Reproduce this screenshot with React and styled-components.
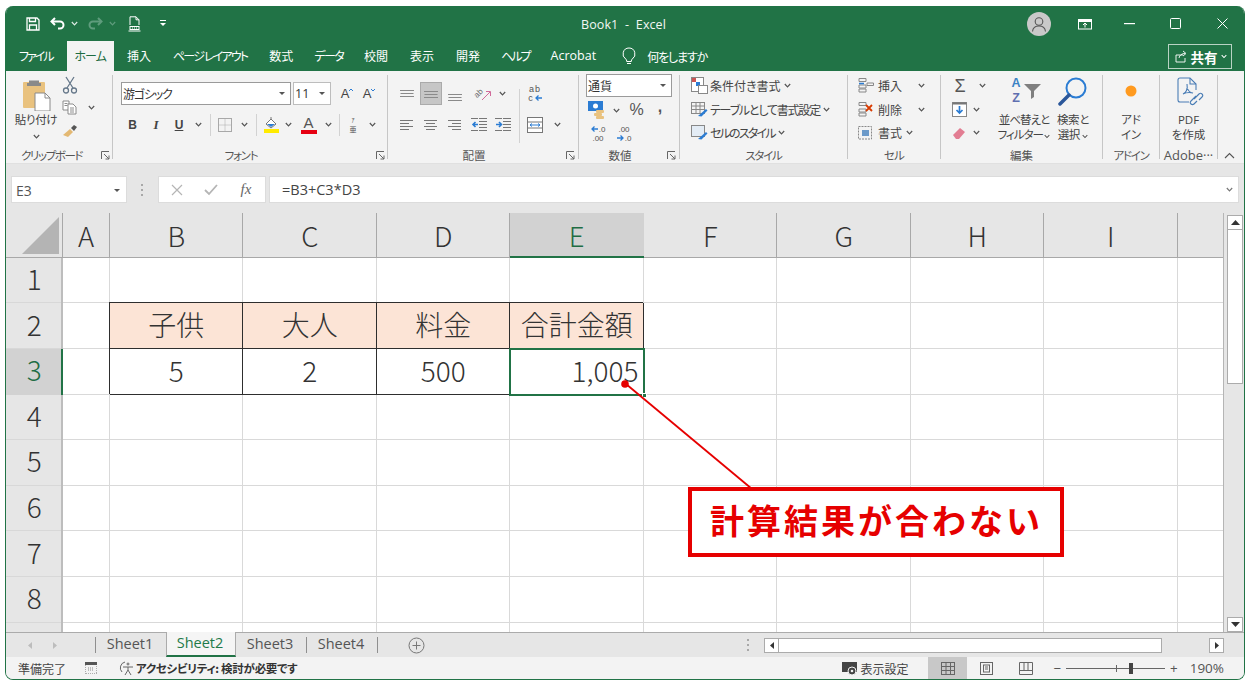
import React from "react";
import styled, { createGlobalStyle } from "styled-components";

const UI = '"Open Sans","Noto Sans CJK JP",sans-serif';
const JP = '"Noto Sans CJK JP","Noto Sans",sans-serif';
const GREEN = "#217346";

const Global = createGlobalStyle`
  html, body { margin: 0; background: #fff; }
  body { font-family: ${UI}; color: #444; font-feature-settings: "palt"; }
`;

const Page = styled.div`
  width: 1251px; height: 687px; box-sizing: border-box; padding: 6px 6px 7px 5px;
`;
const Window = styled.div`
  width: 1240px; height: 674px; box-sizing: border-box; display: flex; flex-direction: column;
  border-left: 1px solid ${GREEN}; border-right: 1px solid ${GREEN}; border-bottom: 1px solid ${GREEN};
  border-radius: 8px; overflow: hidden; position: relative; background: #e6e6e6;
`;

/* ---------- title bar ---------- */
const TitleBar = styled.div`
  height: 35px; flex: none; background: ${GREEN}; color: #fff; position: relative;
  display: flex; align-items: center; padding-left: 20px;
`;
const Qat = styled.div`display: flex; align-items: center; gap: 0;`;
const Slot = styled.span`
  width: ${p => p.$w}px; flex: none; display: inline-flex; align-items: center; justify-content: center;
  height: ${p => p.$h || 22}px; margin-left: ${p => p.$ml || 0}px;
`;
const Title = styled.div`
  position: absolute; left: 575px; top: 10px; font-size: 12.5px; line-height: 18px; letter-spacing: .1px; white-space: pre; color: #f2f7f4;
`;
const WinButtons = styled.div`margin-left: auto; display: flex; align-items: center; padding-right: 0;`;
const Avatar = styled.span`
  width: 24px; height: 24px; border-radius: 50%; background: #c9c9c9; display: flex; align-items: center; justify-content: center; margin-right: 27px;
`;

/* ---------- tabs ---------- */
const TabsBar = styled.div`
  height: 30px; flex: none; background: ${GREEN}; display: flex; align-items: stretch; padding-left: 2px; position: relative; font-family: ${JP};
`;
const Tab = styled.div`
  padding: 0 ${p => p.$pad ?? 11}px; font-size: ${p => p.$latin ? 12.5 : 12}px; line-height: 30px; color: ${p => p.$active ? "#1d6b41" : "#fff"};
  letter-spacing: ${p => p.$ls ?? 0}px; margin-left: ${p => p.$ml ?? 0}px;
  background: ${p => p.$active ? "#f3f3f3" : "transparent"}; white-space: nowrap; font-family: ${p => p.$latin ? UI : JP};
`;
const Tell = styled.div`display: flex; align-items: center; gap: 11px; margin-left: 15px; color: #fff; font-size: 12px; letter-spacing: -1.1px;`;
const Share = styled.div`
  position: absolute; right: 12px; top: 3px; width: 64px; height: 25px; box-sizing: border-box; border: 1px solid #b9d3c4;
  color: #fff; font-size: 13.5px; font-weight: 700; display: flex; align-items: center; justify-content: center; gap: 3px;
`;

/* ---------- ribbon ---------- */
const Ribbon = styled.div`
  height: 93px; flex: none; background: #f3f3f3; display: flex; border-bottom: 1px solid #e0e0e0; box-sizing: border-box; font-family: ${JP}; position: relative; color: #444;
`;
const Group = styled.div`
  width: ${p => p.$w}px; flex: none; display: flex; flex-direction: column; position: relative; height: 100%;
`;
const GroupBody = styled.div`
  flex: 1; display: flex; min-height: 0; padding: ${p => p.$pt ?? 4}px 0 0 ${p => p.$pl ?? 0}px; box-sizing: border-box;
`;
const GroupLabel = styled.div`
  height: 17px; flex: none; text-align: ${p => p.$left ? "left" : "center"}; font-size: ${p => p.$latin ? 13 : 11.5}px; line-height: 16px; color: #555; white-space: nowrap; box-sizing: border-box;
  padding: 1px ${p => p.$launch ? 18 : 0}px 0 ${p => p.$left ? 15 : 0}px; letter-spacing: ${p => p.$ls ?? 0}px; font-family: ${p => p.$latin ? UI : JP};
`;
const Launcher = styled.svg`position: absolute; right: ${p => p.$r ?? 3}px; bottom: 3px;`;
const Divider = styled.div`width: 1px; flex: none; margin: 4px 0 4px; background: #c6c6c6;`;
const Stack = styled.div`display: flex; flex-direction: column; gap: ${p => p.$gap ?? 0}px; flex: none; width: ${p => p.$w ? p.$w + "px" : "auto"}; margin-top: ${p => p.$mt ?? 0}px; margin-left: ${p => p.$ml ?? 0}px;`;
const Row = styled.div`display: flex; align-items: center; height: ${p => p.$h ?? 23}px; flex: none; margin-top: ${p => p.$mt ?? 0}px;`;
const Big = styled.div`
  width: ${p => p.$w}px; flex: none; display: flex; flex-direction: column; align-items: center; margin-left: ${p => p.$ml || 0}px;
  font-size: 11.5px; line-height: 15.5px; color: #444; text-align: center; white-space: nowrap; letter-spacing: ${p => p.$ls ?? 0}px;
`;
const BigIcon = styled.div`height: ${p => p.$h ?? 33}px; display: flex; align-items: flex-start; justify-content: center;`;
const PasteCaret = styled.span`display: flex; margin-top: 6px;`;
const Select = styled.div`
  width: ${p => p.$w}px; height: ${p => p.$h ?? 23}px; flex: none; box-sizing: border-box; background: #fff; border: 1px solid ${p => p.$dark ? "#9a9a9a" : "#bdbdbd"};
  display: flex; align-items: center; justify-content: space-between; padding: 0 5px 0 1px; font-size: ${p => p.$fs ?? 12}px; margin-left: ${p => p.$ml || 0}px; color: #333; font-family: ${p => p.$latin ? UI : JP};
  letter-spacing: ${p => p.$ls ?? 0}px;
`;
const Tri = styled.span`width: 0; height: 0; border-left: 3px solid transparent; border-right: 3px solid transparent; border-top: 3px solid #555; flex: none;`;
const RowSep = styled.span`width: 1px; height: 22px; background: #d2d2d2; flex: none; margin: 0 ${p => p.$m ?? 4}px;`;
const Letter = styled.span`
  font-family: "Liberation Sans", sans-serif; font-size: ${p => p.$fs ?? 12}px; font-weight: ${p => p.$b ? 700 : 400};
  font-style: ${p => p.$i ? "italic" : "normal"}; text-decoration: ${p => p.$u ? "underline" : "none"}; color: ${p => p.$c || "#444"}; line-height: 1;
`;
const Selected = styled.span`
  width: 22px; height: 23px; background: #c6c6c6; border: 1px solid #aaa; box-sizing: border-box; display: flex; align-items: center; justify-content: center;
`;
const StyleText = styled.span`font-size: 12px; color: #444; white-space: nowrap; margin-left: ${p => p.$ml ?? 2}px; letter-spacing: ${p => p.$ls ?? 0}px;`;
const InnerDivider = styled.div`width: 1px; height: 54px; background: #d2d2d2; margin-top: 7px; flex: none;`;
const Collapse = styled.svg`position: absolute; right: 9px; bottom: 4px;`;
const Stacked = styled.span`display: inline-flex; flex-direction: column; align-items: center;`;
const MiniGlyph = styled.span`font-size: ${p => p.$fs}px; line-height: ${p => p.$lh}px; color: #555; font-family: ${JP};`;
const SortLetter = styled.span`font-family: "Liberation Sans", sans-serif; font-weight: 700; font-size: 12.5px; line-height: 14.5px; color: ${p => p.$c};`;
const Decimal = styled.span`font-size: 8px; line-height: 9px; color: #555; font-family: "Liberation Sans", sans-serif; text-align: center; display: inline-flex; flex-direction: column; align-items: center;`;
const DecimalLine = styled.span`display: inline-flex; align-items: center; gap: 1px;`;

/* ---------- formula bar ---------- */
const FormulaBar = styled.div`
  height: 49px; flex: none; background: #e6e6e6; display: flex; padding: 12px 5px 10px 5px; box-sizing: border-box; align-items: stretch;
`;
const NameBox = styled.div`
  width: 116px; background: #fff; border: 1px solid #dcdcdc; box-sizing: border-box; display: flex; align-items: center; justify-content: space-between;
  padding: 2px 6px 0 4px; font-size: 14px; color: #555; flex: none;
`;
const Grip = styled.div`width: 31px; flex: none; display: flex; align-items: center; justify-content: center;`;
const FxBox = styled.div`
  width: 108px; flex: none; background: #fff; border: 1px solid #dcdcdc; box-sizing: border-box; display: flex; align-items: center;
`;
const FxSign = styled.span`font-family: "Liberation Serif", serif; font-style: italic; font-size: 15px; color: #666; font-weight: 400; width: 20px; margin-left: 18px; text-align: center;`;
const FormulaInput = styled.div`
  flex: 1; margin-left: 3px; background: #fff; border: 1px solid #dcdcdc; box-sizing: border-box; display: flex; align-items: center; justify-content: space-between;
  padding: 0 5px 1px 12px; font-size: 14.5px; color: #444;
`;

/* ---------- sheet ---------- */
const SheetWrap = styled.div`height: 419px; flex: none; display: flex; background: #e6e6e6; position: relative;`;
const SheetGrid = styled.div`
  width: 1217px; flex: none; height: 100%; overflow: hidden; display: grid; background: #fff;
  grid-template-columns: 56.5px 47px repeat(8, 133.5px) 46px;
  grid-template-rows: 44.8px repeat(9, 45.6px);
  border-right: 1px solid #b5b5b5; box-sizing: content-box;
  font-family: ${JP}; color: #333;
`;
const Corner = styled.div`background: #e6e6e6; display: flex; align-items: flex-start; justify-content: flex-start; box-shadow: inset -1px -1px 0 #a8a8a8;`;
const ColHead = styled.div`
  background: ${p => p.$sel ? "#d2d2d2" : "#e6e6e6"}; color: ${p => p.$sel ? "#1f6d44" : "#333"};
  display: flex; align-items: center; justify-content: center; font-size: 27.5px; font-weight: 300; padding-bottom: 1px; box-sizing: border-box;
  box-shadow: ${p => p.$sel ? `inset 0 -2px 0 ${GREEN}` : "inset -1px -1px 0 #a8a8a8"};
`;
const RowHead = styled.div`
  background: ${p => p.$sel ? "#d2d2d2" : "#e6e6e6"}; color: ${p => p.$sel ? "#1f6d44" : "#333"};
  display: flex; align-items: center; justify-content: center; font-size: 28px; font-weight: 300; padding-bottom: 5px; box-sizing: border-box;
  box-shadow: ${p => p.$sel ? `inset -2px 0 0 ${GREEN}` : "inset -2px 0 0 #bdbdbd, inset 0 -1px 0 #d8d8d8"};
`;
const Cell = styled.div`
  position: relative; display: flex; align-items: center; font-size: 28px; font-weight: 300; white-space: nowrap; overflow: visible;
  justify-content: ${p => p.$right ? "flex-end" : "center"}; padding: 0 ${p => p.$right ? 5 : 0}px 4px 0; box-sizing: border-box;
  background: ${p => p.$fill ? "#fce4d6" : "#fff"};
  box-shadow: ${p => p.$boxed ? "inset -1px -1px 0 #2e2e2e, -1px -1px 0 0 #2e2e2e" : "inset -1px -1px 0 #d9d9d9"};
  ${p => p.$boxed ? "z-index: 1;" : ""}
  ${p => p.$active ? `box-shadow: none; outline: 2px solid ${GREEN}; outline-offset: -1.5px; z-index: 2;` : ""}
`;
const Handle = styled.span`position: absolute; right: -3px; bottom: -3px; width: 5px; height: 5px; background: ${GREEN}; border: 1px solid #fff; box-sizing: border-box;`;
const ScrollCol = styled.div`
  flex: 1; display: flex; flex-direction: column; align-items: flex-start; padding: 2px 0 0 3px; box-sizing: border-box;
`;
const VBtn = styled.div`
  width: 16px; height: 15px; flex: none; background: #fff; border: 1px solid #ababab; box-sizing: border-box; display: flex; align-items: center; justify-content: center;
`;
const VThumb = styled.div`width: 16px; height: 154px; flex: none; background: #fff; border: 1px solid #ababab; border-top: none; box-sizing: border-box;`;
const VSpacer = styled.div`flex: 1;`;
const Callout = styled.div`
  position: absolute; left: 682px; top: 274px; width: 376px; height: 70px; box-sizing: border-box; border: 4px solid #e60000; background: #fff;
  color: #e60000; font-family: ${JP}; font-weight: 700; font-size: 34px; letter-spacing: 3px; display: flex; align-items: center; padding-left: 18px; padding-bottom: 6px; white-space: nowrap; z-index: 5;
  font-feature-settings: normal;
`;
const Leader = styled.svg`position: absolute; left: 0; top: 0; z-index: 4; pointer-events: none;`;

/* ---------- sheet tabs ---------- */
const SheetTabs = styled.div`
  height: 25px; flex: none; background: #e6e6e6; display: flex; align-items: stretch; box-sizing: border-box; border-top: 1px solid #ababab; padding-right: 20px; color: #555;
`;
const NavArea = styled.div`width: 89px; flex: none; display: flex; align-items: center; padding-left: 22px; gap: 20px; box-sizing: border-box;`;
const SheetTab = styled.div`
  width: 70px; flex: none; box-sizing: border-box; text-align: center; font-size: 14.5px; line-height: 22px; color: ${p => p.$active ? "#1f7a4a" : "#555"};
  background: ${p => p.$active ? "#f5f5f5" : "transparent"}; padding-right: 2px;
  position: relative; top: ${p => p.$active ? -1 : 0}px; height: ${p => p.$active ? 25 : 24}px;
  ${p => p.$active ? `border: 1px solid #ababab; border-bottom: 2px solid ${GREEN}; border-top: none;` : ""}
`;
const TabSep = styled.span`width: 1px; height: 16px; background: #8f8f8f; flex: none; align-self: center; margin-top: -1px;`;
const AddBtn = styled.div`margin-left: 30px; display: flex; align-items: center;`;
const HScroll = styled.div`margin-left: auto; display: flex; align-items: center; flex: none;`;
const HBtn = styled.div`
  width: 15px; height: 15px; background: #fff; border: 1px solid #ababab; box-sizing: border-box; display: flex; align-items: center; justify-content: center; flex: none;
`;
const HThumb = styled.div`width: 383px; height: 15px; background: #fff; border: 1px solid #ababab; border-left: none; box-sizing: border-box; flex: none; margin-right: 47px;`;

/* ---------- status bar ---------- */
const StatusBar = styled.div`
  flex: 1; background: #f3f3f3; display: flex; align-items: center; padding: 0 20px 0 12px; font-family: ${JP}; font-size: 12px; color: #444; min-height: 0;
`;
const Access = styled.span`font-weight: 700; font-size: 11.5px; color: #333; white-space: nowrap; letter-spacing: -.3px;`;
const StatusRight = styled.div`margin-left: auto; display: flex; align-items: stretch; height: 100%;`;
const ViewBtn = styled.div`
  width: 39px; display: flex; align-items: center; justify-content: center; background: ${p => p.$active ? "#c8c8c8" : "transparent"}; flex: none;
`;
const Inline = styled.div`display: flex; align-items: center; margin-right: ${p => p.$mr ?? 0}px; margin-left: ${p => p.$ml ?? 0}px; margin-top: ${p => p.$mt ?? 0}px; gap: ${p => p.$gap ?? 0}px;`;
const Zoom = styled.span`font-family: ${UI}; font-size: 13.5px; color: #555; margin-left: 12px;`;
const Track = styled.div`width: 99px; height: 1px; background: #666; position: relative; flex: none;`;
const TrackTick = styled.span`position: absolute; left: 50px; top: -3px; width: 1px; height: 7px; background: #666;`;
const TrackThumb = styled.span`position: absolute; left: 63px; top: -5px; width: 4px; height: 11px; background: #444;`;

/* ---------- icons ---------- */
const Chev = ({ c = "#555", w = 7 }) => (
  <svg width={w} height="5" viewBox="0 0 7 5"><path d="M.8 1 3.5 3.8 6.2 1" fill="none" stroke={c} strokeWidth="1.2" /></svg>
);
const Lines = ({ kind, top }) => {
  const ws = { l: [[0, 13], [0, 9], [0, 13], [0, 9]], c: [[0, 13], [2, 9], [0, 13], [2, 9]], r: [[0, 13], [4, 9], [0, 13], [4, 9]] }[kind];
  if (top !== undefined) {
    return (
      <svg width="14" height="14" viewBox="0 0 14 14">
        {[0, 3, 6].map((d, i) => <rect key={i} x={i === 1 ? .5 : 0} y={top + d} width={i === 1 ? 13 : 14} height="1" fill="#8a8a8a" />)}
      </svg>
    );
  }
  return (
    <svg width="14" height="12" viewBox="0 0 14 12">
      {ws.map(([x, w], i) => <rect key={i} x={x} y={1 + i * 3} width={w} height="1" fill="#777" />)}
    </svg>
  );
};
const Indent = ({ flip }) => (
  <svg width="16" height="14" viewBox="0 0 16 14">
    <g fill="#777">{[0, 3, 6, 9, 12].map(y => <rect key={y} x={8} y={y} width="8" height="1" />)}</g>
    <rect x="0" y="0" width="7" height="1" fill="#777" /><rect x="0" y="12" width="7" height="1" fill="#777" />
    <path d={flip ? "M1 6.5h5M4 4l2.5 2.5L4 9" : "M7 6.5H2M4.5 4 2 6.5 4.5 9"} stroke="#2b7cd3" strokeWidth="1.6" fill="none" />
  </svg>
);
const MiniArrow = ({ left }) => (
  <svg width="7" height="6" viewBox="0 0 7 6" fill="none" stroke="#2b7cd3" strokeWidth="1.3"><path d={left ? "M7 3H1M3.500.5 1 3l2.500 2.500" : "M0 3h6M3.500.5 6 3 3.500 5.500"} /></svg>
);
const LaunchIcon = ({ r }) => (
  <Launcher $r={r} width="9" height="9" viewBox="0 0 9 9" fill="none" stroke="#666"><path d="M.5 8V.5H8M3 3l5 5M8 4.500V8H4.500" /></Launcher>
);

function App() {
  const cols = ["A", "B", "C", "D", "E", "F", "G", "H", "I", "J"];
  const heads = { 2: ["子供", "大人", "料金", "合計金額"], 3: ["5", "2", "500", "1,005"] };
  return (
    <Page>
      <Global />
      <Window>
        <TitleBar>
          <Qat>
            <Slot $w="14">
              <svg width="14" height="14" viewBox="0 0 14 14" fill="none" stroke="#fff" strokeWidth="1.3"><path d="M1 1h10l2 2v10H1z" /><path d="M3.5 1v3.5h6V1M3.5 13V8h7v5" /></svg>
            </Slot>
            <Slot $w="18" $ml="9">
              <svg width="16" height="13" viewBox="0 0 16 13" fill="none" stroke="#fff" strokeWidth="2"><path d="M5 1 1.5 4.5 5 8" /><path d="M2 4.5h8a3.5 3.5 0 0 1 0 7H8" /></svg>
            </Slot>
            <Slot $w="8" $ml="3"><Chev c="#dcebe3" /></Slot>
            <Slot $w="18" $ml="8">
              <svg width="16" height="13" viewBox="0 0 16 13" fill="none" stroke="#5f9c7d" strokeWidth="2"><path d="M11 1l3.5 3.5L11 8" /><path d="M14 4.500H6a3.500 3.500 0 0 0 0 7h2" /></svg>
            </Slot>
            <Slot $w="8" $ml="4"><Chev c="#5f9c7d" /></Slot>
            <Slot $w="13" $ml="12">
              <svg width="13" height="16" viewBox="0 0 13 16" fill="none" stroke="#fff" strokeWidth="1"><path d="M2 9V.8h6l3 3V9M8 .8v3h3" /><path d="M.5 15h12" /><rect x="2" y="10.500" width="9" height="3" /><path d="M4 12h1M6 12h1M8 12h1" /></svg>
            </Slot>
            <Slot $w="6" $ml="19">
              <svg width="6" height="7" viewBox="0 0 6 7"><rect y="0" width="6" height="1" fill="#fff" /><path d="M0 3h6L3 6z" fill="#fff" /></svg>
            </Slot>
          </Qat>
          <Title>Book1  -  Excel</Title>
          <WinButtons>
            <Avatar>
              <svg width="16" height="16" viewBox="0 0 16 16" fill="none" stroke="#555" strokeWidth="1.1"><circle cx="8" cy="5.500" r="3.800" /><path d="M1.500 15.500c.4-3.600 3-5.500 6.500-5.500s6.100 1.900 6.500 5.500" /></svg>
            </Avatar>
            <Slot $w="14">
              <svg width="14" height="12" viewBox="0 0 14 12" fill="none" stroke="#fff"><rect x=".5" y="1.500" width="13" height="9.500" /><path d="M.5 1.500h13v2H.5z" fill="#fff" /><path d="M7 9.500V5M5 7l2-2 2 2" /></svg>
            </Slot>
            <Slot $w="12" $ml="31"><svg width="11" height="2" viewBox="0 0 11 2"><rect width="11" height="1.200" fill="#fff" /></svg></Slot>
            <Slot $w="12" $ml="34"><svg width="11" height="11" viewBox="0 0 11 11" fill="none" stroke="#fff"><rect x=".5" y=".5" width="10" height="10" rx="1" /></svg></Slot>
            <Slot $w="12" $ml="35"><svg width="11" height="11" viewBox="0 0 11 11" stroke="#fff" strokeWidth="1"><path d="M.5.500l10 10M10.500.500l-10 10" /></svg></Slot>
            <Slot $w="16" />
          </WinButtons>
        </TitleBar>

        <TabsBar>
          <Tab $ls="-2">ファイル</Tab>
          <Tab $active $pad="8" $ml="3" $ls="-1">ホーム</Tab>
          <Tab $ml="2">挿入</Tab>
          <Tab $ls="-1.8">ページ レイアウト</Tab>
          <Tab>数式</Tab>
          <Tab $ls="-1.6" $pad="10">データ</Tab>
          <Tab>校閲</Tab>
          <Tab>表示</Tab>
          <Tab>開発</Tab>
          <Tab $ls="-2" $pad="10">ヘルプ</Tab>
          <Tab $latin>Acrobat</Tab>
          <Tell>
            <svg width="14" height="18" viewBox="0 0 14 18" fill="none" stroke="#fff" strokeWidth="1"><path d="M7 1a6 6 0 0 0-3.300 11c.6.500 1 1.200 1 2v.500h4.600V14c0-.8.400-1.500 1-2A6 6 0 0 0 7 1z" /><path d="M5 16.500h4" /></svg>
            <span>何をしますか</span>
          </Tell>
          <Share>
            <svg width="14" height="13" viewBox="0 0 14 13" fill="none" stroke="#fff" strokeWidth=".9"><path d="M9 5H2v7h9V8" /><path d="M5 8c.5-3 3-4.500 6-4.500M9 1l3 2.500L9 6" /></svg>
            共有
            <Chev c="#fff" w={6} />
          </Share>
        </TabsBar>

        <Ribbon>
          {/* clipboard */}
          <Group $w="106">
            <GroupBody $pt="8" $pl="9">
              <Big $w="42" $ls="-.3">
                <BigIcon $h="33">
                  <svg width="30" height="32" viewBox="0 0 30 32">
                    <rect x="2" y="3" width="22" height="26" rx="1" fill="#e9c27f" />
                    <path d="M8 4V1.500h10V4h2v3H6V4z" fill="#8a8a8a" />
                    <path d="M14 14h10l5 5v13H14z" fill="#fff" stroke="#8a8a8a" />
                    <path d="M24 14v5h5" fill="none" stroke="#8a8a8a" />
                  </svg>
                </BigIcon>
                <span>貼り付け</span>
                <PasteCaret><Chev /></PasteCaret>
              </Big>
              <Stack $w="22" $ml="5" $mt="-5">
                <Row $h="22.5">
                  <svg width="16" height="18" viewBox="0 0 16 18" fill="none" stroke="#66788a" strokeWidth="1.300"><path d="M4 1l7 11M12 1 5 12" /><circle cx="4" cy="14.500" r="2.500" /><circle cx="12" cy="14.500" r="2.500" /></svg>
                </Row>
                <Row $h="22.5">
                  <svg width="15" height="15" viewBox="0 0 15 15" fill="#fff" stroke="#7f7f7f" strokeWidth=".9"><path d="M1 1h6v9H1z" /><path d="M6 4h5l3 3v7H6z" /><path d="M8 8h4M8 10h4M8 12h4M2.500 3.500h3M2.500 5.500h3" /></svg>
                </Row>
                <Row $h="22.5">
                  <svg width="16" height="16" viewBox="0 0 16 16"><path d="M1 13 8 7l3 3-5 5z" fill="#e3b872" /><path d="M9 6l3-3 3 2-3 4z" fill="#555" /></svg>
                </Row>
              </Stack>
              <Stack $w="14" $mt="-5">
                <Row $h="22.5" />
                <Row $h="22.5"><Slot $w="14"><Chev /></Slot></Row>
              </Stack>
            </GroupBody>
            <GroupLabel $left $ls="-1.4">クリップボード</GroupLabel>
            <LaunchIcon r="2" />
          </Group>
          <Divider />

          {/* font */}
          <Group $w="274">
            <GroupBody $pt="11" $pl="8">
              <Stack $gap="8">
                <Row>
                  <Select $w="170" $dark $fs="12" $ls="-1.2">游ゴシック<Tri /></Select>
                  <Select $w="38" $ml="2" $fs="12.5" $latin>11<Tri /></Select>
                  <Slot $w="22" $ml="5"><Letter $fs="13">A</Letter><svg width="4" height="4" viewBox="0 0 4 4" style={{ marginBottom: 8 }}><path d="M0 3l2-2 2 2" fill="none" stroke="#2b7cd3" /></svg></Slot>
                  <Slot $w="22"><Letter $fs="13">A</Letter><svg width="4" height="4" viewBox="0 0 4 4" style={{ marginBottom: 8 }}><path d="M0 1l2 2 2-2" fill="none" stroke="#2b7cd3" /></svg></Slot>
                </Row>
                <Row $h="23">
                  <Slot $w="23"><Letter $b>B</Letter></Slot>
                  <Slot $w="24"><Letter $b $i style={{ fontFamily: '"Liberation Serif",serif', fontSize: 13 }}>I</Letter></Slot>
                  <Slot $w="22"><Letter $b $u>U</Letter></Slot>
                  <Slot $w="16"><Chev /></Slot>
                  <RowSep $m="4" />
                  <Slot $w="20">
                    <svg width="14" height="14" viewBox="0 0 14 14" fill="none" stroke="#a8a8a8"><rect x=".5" y=".5" width="13" height="13" /><path d="M7 .5v13M.5 7h13" strokeDasharray="1 1" /></svg>
                  </Slot>
                  <Slot $w="18"><Chev /></Slot>
                  <RowSep $m="2.500" />
                  <Slot $w="25">
                    <svg width="16" height="17" viewBox="0 0 16 17"><path d="M2 8l5-5 5 5-5 4z" fill="#fff" stroke="#777" /><path d="M7 3V1" stroke="#777" /><path d="M3 8h8l-4 3z" fill="#2b7cd3" /><rect y="13" width="15" height="4" fill="#ffeb00" /></svg>
                  </Slot>
                  <Slot $w="9"><Chev /></Slot>
                  <Slot $w="31">
                    <Stacked>
                      <Letter $fs="15" $c="#555">A</Letter>
                      <svg width="16" height="4" viewBox="0 0 16 4"><rect width="16" height="4" fill="#e60012" /></svg>
                    </Stacked>
                  </Slot>
                  <Slot $w="8"><Chev /></Slot>
                  <RowSep $m="6.500" />
                  <Slot $w="14">
                    <Stacked>
                      <MiniGlyph $fs="6" $lh="9">ｱ</MiniGlyph>
                      <MiniGlyph $fs="7" $lh="10">亜</MiniGlyph>
                    </Stacked>
                  </Slot>
                  <Slot $w="24"><Chev /></Slot>
                </Row>
              </Stack>
            </GroupBody>
            <GroupLabel $launch $ls="-1.2">フォント</GroupLabel>
            <LaunchIcon r="2" />
          </Group>
          <Divider />

          {/* alignment */}
          <Group $w="190">
            <GroupBody $pt="11" $pl="7">
              <Stack $gap="8" $w="124">
                <Row>
                  <Slot $w="24"><Lines top={3} /></Slot>
                  <Slot $w="24"><Selected><Lines top={4} /></Selected></Slot>
                  <Slot $w="24"><Lines top={7} /></Slot>
                  <Slot $w="28">
                    <svg width="22" height="17" viewBox="0 0 22 17" fill="none">
                      <text x="4" y="12" transform="rotate(-45 7 9)" fontFamily="Liberation Sans, sans-serif" fontSize="8" fill="#666">ab</text>
                      <path d="M12 15l8-8" stroke="#d06a9a" />
                      <path d="M16 6.500h4.500v4.500" stroke="#d06a9a" />
                    </svg>
                  </Slot>
                  <Slot $w="14"><Chev /></Slot>
                </Row>
                <Row>
                  <Slot $w="24"><Lines kind="l" /></Slot>
                  <Slot $w="24"><Lines kind="c" /></Slot>
                  <Slot $w="24"><Lines kind="r" /></Slot>
                  <Slot $w="24"><Indent /></Slot>
                  <Slot $w="24"><Indent flip /></Slot>
                </Row>
              </Stack>
              <InnerDivider />
              <Stack $gap="8">
                <Row>
                  <Slot $w="30">
                    <Decimal style={{ fontSize: 9, letterSpacing: 1 }}>
                      <span>ab</span>
                      <DecimalLine>c<MiniArrow left /></DecimalLine>
                    </Decimal>
                  </Slot>
                </Row>
                <Row>
                  <Slot $w="30">
                    <svg width="16" height="16" viewBox="0 0 16 16" fill="#fff" stroke="#777"><rect x=".5" y=".5" width="15" height="15" /><path d="M.5 5h15M.5 11h15" /><path d="M3 8h10M5 6.500 3 8l2 1.500M11 6.500 13 8l-2 1.500" stroke="#2b7cd3" fill="none" /></svg>
                  </Slot>
                  <Slot $w="14"><Chev /></Slot>
                </Row>
              </Stack>
            </GroupBody>
            <GroupLabel $launch>配置</GroupLabel>
            <LaunchIcon r="3" />
          </Group>
          <Divider />

          {/* number */}
          <Group $w="100">
            <GroupBody $pt="3" $pl="7">
              <Stack>
                <Select $w="86" $dark $fs="12">通貨<Tri /></Select>
                <Row $mt="1" $h="24">
                  <Slot $w="20">
                    <svg width="17" height="18" viewBox="0 0 17 18"><rect x="0" y="0" width="15" height="10" fill="#2b7cd3" /><circle cx="7.500" cy="5" r="2.500" fill="#fff" /><rect x="8" y="9" width="8" height="3" rx="1" fill="#e9c27f" /><rect x="6" y="12" width="8" height="3" rx="1" fill="#e9c27f" /><rect x="8" y="15" width="8" height="3" rx="1" fill="#e9c27f" /></svg>
                  </Slot>
                  <Slot $w="20"><Chev /></Slot>
                  <Slot $w="21"><Letter $fs="16" $c="#555">%</Letter></Slot>
                  <Slot $w="26"><Letter $fs="16" $b $c="#555" style={{ marginBottom: 6 }}>,</Letter></Slot>
                </Row>
                <Row $h="23">
                  <Slot $w="24">
                    <Decimal><DecimalLine><MiniArrow left />.0</DecimalLine><span>.00</span></Decimal>
                  </Slot>
                  <Slot $w="28">
                    <Decimal><span>.00</span><DecimalLine><MiniArrow />.0</DecimalLine></Decimal>
                  </Slot>
                </Row>
              </Stack>
            </GroupBody>
            <GroupLabel $launch>数値</GroupLabel>
            <LaunchIcon r="3" />
          </Group>
          <Divider />

          {/* styles */}
          <Group $w="167">
            <GroupBody $pt="3" $pl="11">
              <Stack>
                <Row $h="23.5">
                  <svg width="17" height="17" viewBox="0 0 17 17" fill="#fff" stroke="#888"><rect x=".5" y=".5" width="12" height="14" /><rect x="1" y="1" width="4" height="4" fill="#c55" stroke="none" /><rect x="5" y="5" width="4" height="4" fill="#2b7cd3" stroke="none" /><rect x="7.500" y="8.500" width="9" height="8" /></svg>
                  <StyleText>条件付き書式</StyleText><Slot $w="14"><Chev /></Slot>
                </Row>
                <Row $h="23.5">
                  <svg width="17" height="17" viewBox="0 0 17 17" fill="none" stroke="#888"><rect x=".5" y="1.500" width="13" height="11" /><path d="M.5 5h13M.5 8.500h13M5 1.500v11M9 1.500v11" /><path d="M7 15l8-7 1.500 1.500-6 6z" fill="#2b7cd3" stroke="none" /></svg>
                  <StyleText $ls="-1.2">テーブルとして書式設定</StyleText><Slot $w="14"><Chev /></Slot>
                </Row>
                <Row $h="23.5">
                  <svg width="17" height="17" viewBox="0 0 17 17" fill="#e3ecf5" stroke="#888"><rect x=".5" y="1.500" width="13" height="11" /><path d="M7 15l8-7 1.500 1.500-6 6z" fill="#2b7cd3" stroke="none" /></svg>
                  <StyleText $ls="-1.8">セルのスタイル</StyleText><Slot $w="14"><Chev /></Slot>
                </Row>
              </Stack>
            </GroupBody>
            <GroupLabel $ls="-1.2">スタイル</GroupLabel>
          </Group>
          <Divider />

          {/* cells */}
          <Group $w="92">
            <GroupBody $pt="3" $pl="10">
              <Stack>
                <Row $h="23.5">
                  <svg width="16" height="15" viewBox="0 0 16 15" fill="none" stroke="#888"><path d="M1 .5h7v3H1zM1 7h7v3H1zM1 11h7v3H1zM9 5h6.500v2.500H9z" /><path d="M1 5.500h5" stroke="#2b7cd3" strokeWidth="1.500" /></svg>
                  <StyleText $ml="4">挿入</StyleText><Slot $w="24" $ml="7"><Chev /></Slot>
                </Row>
                <Row $h="23.5">
                  <svg width="16" height="15" viewBox="0 0 16 15" fill="none" stroke="#888"><path d="M1 .5h7v3H1zM1 7h7v3H1zM1 11h7v3H1z" /><path d="M8 3l6 6M14 3 8 9" stroke="#d83b01" strokeWidth="1.800" /></svg>
                  <StyleText $ml="4">削除</StyleText><Slot $w="24" $ml="7"><Chev /></Slot>
                </Row>
                <Row $h="23.5">
                  <svg width="16" height="15" viewBox="0 0 16 15" fill="none" stroke="#888"><rect x=".5" y="1.500" width="13" height="12.500" strokeDasharray="2 1" /><rect x="4" y="5" width="7" height="6" fill="#6c9ac9" stroke="none" /></svg>
                  <StyleText $ml="4">書式</StyleText><Slot $w="12" $ml="1"><Chev /></Slot>
                </Row>
              </Stack>
            </GroupBody>
            <GroupLabel $ls="-.8">セル</GroupLabel>
          </Group>
          <Divider />

          {/* editing */}
          <Group $w="161">
            <GroupBody $pt="3" $pl="11">
              <Stack $w="44">
                <Row $h="23.5">
                  <Slot $w="16"><Letter $fs="18" $c="#555">Σ</Letter></Slot>
                  <Slot $w="29"><Chev /></Slot>
                </Row>
                <Row $h="23.5">
                  <svg width="16" height="15" viewBox="0 0 16 15"><rect x=".5" y=".5" width="14" height="14" fill="#fff" stroke="#888" /><rect x=".5" y=".5" width="14" height="2" fill="#777" /><path d="M7.500 4v7M4.500 8l3 3 3-3" stroke="#2b7cd3" strokeWidth="1.700" fill="none" /></svg>
                  <Slot $w="16" $ml="0"><Chev /></Slot>
                </Row>
                <Row $h="23.5">
                  <svg width="16" height="14" viewBox="0 0 16 14"><path d="M1 9l7-7 5 4-6 7H4z" fill="#e27d92" /></svg>
                  <Slot $w="16"><Chev /></Slot>
                </Row>
              </Stack>
              <Big $w="56" $ls="-1">
                <BigIcon $h="37.500">
                  <Inline $gap="4" $ml="4" $mt="2">
                    <Stacked>
                      <SortLetter $c="#3a82c4">A</SortLetter>
                      <SortLetter $c="#5f6fb0">Z</SortLetter>
                    </Stacked>
                    <svg width="17" height="16" viewBox="0 0 17 16"><path d="M0 1h17L10 8v6l-3 2V8z" fill="#7f7f7f" /></svg>
                  </Inline>
                </BigIcon>
                <span>並べ替えと</span>
                <span>フィルター <Chev w={6} /></span>
              </Big>
              <Big $w="44" $ml="-1" $ls="-.3">
                <BigIcon $h="37.500">
                  <svg width="30" height="30" viewBox="0 0 30 30" fill="none" style={{ marginTop: 3 }}><circle cx="18" cy="11" r="9.500" stroke="#2b7cd3" strokeWidth="2" /><path d="M11 18 2 27" stroke="#2b579a" strokeWidth="3.500" strokeLinecap="round" /></svg>
                </BigIcon>
                <span>検索と</span>
                <span>選択 <Chev w={6} /></span>
              </Big>
            </GroupBody>
            <GroupLabel>編集</GroupLabel>
          </Group>
          <Divider />

          {/* addins */}
          <Group $w="56">
            <GroupBody $pt="3">
              <Big $w="56">
                <BigIcon $h="37.500">
                  <svg width="14" height="32" viewBox="0 0 14 32"><circle cx="7" cy="17" r="5.500" fill="#ff9a1f" /></svg>
                </BigIcon>
                <span>アド</span>
                <span>イン</span>
              </Big>
            </GroupBody>
            <GroupLabel $ls="-1.2">アドイン</GroupLabel>
          </Group>
          <Divider />

          {/* adobe */}
          <Group $w="57">
            <GroupBody $pt="3">
              <Big $w="57">
                <BigIcon $h="37.500">
                  <svg width="30" height="33" viewBox="0 0 30 33" fill="none" stroke="#4a7db5" strokeWidth="1.100"><path d="M15 28H6a2 2 0 0 1-2-2V6a2 2 0 0 1 2-2h10l6 6v6" /><path d="M16 4v6h6" /><path d="M9 20c3-1 5-5 4-10-.5 6 3 9 6 9-4-1-8 0-10 1z" /><path d="M20 25l5-5a2 2 0 0 1 3 3l-3 3M22 22l-5 5a2 2 0 0 0 3 3l3-3" /></svg>
                </BigIcon>
                <span style={{ fontFamily: UI }}>PDF</span>
                <span>を作成</span>
              </Big>
            </GroupBody>
            <GroupLabel $latin>Adobe···</GroupLabel>
          </Group>
          <Divider />
          <Collapse width="11" height="7" viewBox="0 0 11 7" fill="none" stroke="#555" strokeWidth="1.100"><path d="M1 6l4.500-4.500L10 6" /></Collapse>
        </Ribbon>

        <FormulaBar>
          <NameBox>E3<Tri /></NameBox>
          <Grip>
            <svg width="3" height="12" viewBox="0 0 3 12" fill="#a8a8a8"><rect y="0" width="2" height="2" /><rect y="5" width="2" height="2" /><rect y="10" width="2" height="2" /></svg>
          </Grip>
          <FxBox>
            <Slot $w="13" $ml="11"><svg width="12" height="12" viewBox="0 0 12 12" stroke="#b5b5b5" strokeWidth="1.200"><path d="M1 1l10 10M11 1 1 11" /></svg></Slot>
            <Slot $w="14" $ml="21"><svg width="14" height="12" viewBox="0 0 14 12" fill="none" stroke="#b5b5b5" strokeWidth="1.800"><path d="M1 6l4 4 8-9" /></svg></Slot>
            <FxSign>fx</FxSign>
          </FxBox>
          <FormulaInput>=B3+C3*D3<Chev c="#777" /></FormulaInput>
        </FormulaBar>

        <SheetWrap>
          <SheetGrid>
            <Corner>
              <svg width="38" height="38" viewBox="0 0 38 38" style={{ margin: "4px 0 0 16px" }}><path d="M37 0v37H0z" fill="#b4b4b4" /></svg>
            </Corner>
            {cols.map(c => <ColHead key={c} $sel={c === "E"}>{c === "J" ? "" : c}</ColHead>)}
            {[1, 2, 3, 4, 5, 6, 7, 8, 9].map(r => (
              <React.Fragment key={r}>
                <RowHead $sel={r === 3}>{r === 9 ? "" : r}</RowHead>
                {cols.map((c, i) => {
                  const idx = i - 1;
                  const inTable = heads[r] && idx >= 0 && idx < 4;
                  const isE3 = r === 3 && c === "E";
                  return (
                    <Cell key={c} $boxed={inTable} $fill={r === 2 && inTable} $active={isE3} $right={isE3}>
                      {inTable ? heads[r][idx] : ""}
                      {isE3 && <Handle />}
                    </Cell>
                  );
                })}
              </React.Fragment>
            ))}
          </SheetGrid>
          <ScrollCol>
            <VBtn><svg width="9" height="5" viewBox="0 0 9 5"><path d="M4.500 0 9 5H0z" fill="#333" /></svg></VBtn>
            <VThumb />
            <VSpacer />
            <VBtn><svg width="9" height="5" viewBox="0 0 9 5"><path d="M0 0h9L4.500 5z" fill="#333" /></svg></VBtn>
          </ScrollCol>
          <Leader width="1000" height="300">
            <path d="M620 171 746 276" stroke="#e60000" strokeWidth="1.800" fill="none" />
            <circle cx="619" cy="171" r="3.800" fill="#e60000" />
          </Leader>
          <Callout>計算結果が合わない</Callout>
        </SheetWrap>

        <SheetTabs>
          <NavArea>
            <svg width="5" height="7" viewBox="0 0 5 7"><path d="M4 0v7L0 3.500z" fill="#bdbdbd" /></svg>
            <svg width="5" height="7" viewBox="0 0 5 7"><path d="M0 0v7l4-3.500z" fill="#bdbdbd" /></svg>
          </NavArea>
          <TabSep />
          <SheetTab>Sheet1</SheetTab>
          <SheetTab $active>Sheet2</SheetTab>
          <SheetTab>Sheet3</SheetTab>
          <TabSep />
          <SheetTab>Sheet4</SheetTab>
          <TabSep />
          <AddBtn>
            <svg width="17" height="17" viewBox="0 0 17 17" fill="none" stroke="#777"><circle cx="8.500" cy="8.500" r="7.500" /><path d="M8.500 4.500v8M4.500 8.500h8" /></svg>
          </AddBtn>
          <HScroll>
            <svg width="3" height="12" viewBox="0 0 3 12" fill="#a8a8a8" style={{ marginRight: 14 }}><rect y="0" width="2" height="2" /><rect y="5" width="2" height="2" /><rect y="10" width="2" height="2" /></svg>
            <HBtn><svg width="4" height="7" viewBox="0 0 4 7"><path d="M4 0v7L0 3.500z" fill="#333" /></svg></HBtn>
            <HThumb />
            <HBtn><svg width="4" height="7" viewBox="0 0 4 7"><path d="M0 0v7l4-3.500z" fill="#333" /></svg></HBtn>
          </HScroll>
        </SheetTabs>

        <StatusBar>
          <span>準備完了</span>
          <Inline $ml="19">
            <svg width="12" height="12" viewBox="0 0 12 12"><rect x="0" y="2" width="12" height="10" fill="none" stroke="#666" strokeDasharray="1 1" /><rect x="0" y="0" width="12" height="3" fill="#555" /><path d="M3 6h6M3 8h6" stroke="#888" strokeDasharray="1 1" /></svg>
          </Inline>
          <Inline $ml="22" $gap="2">
            <svg width="15" height="16" viewBox="0 0 15 16" fill="none" stroke="#666"><path d="M6 2a6 6 0 0 0-3 10" /><circle cx="9" cy="4" r="1" /><path d="M4 7h10M9 7v3" /><path d="M6 15l3-5 3 5" /></svg>
            <Access>アクセシビリティ: 検討が必要です</Access>
          </Inline>
          <StatusRight>
            <Inline $mr="20" $gap="3">
              <svg width="15" height="16" viewBox="0 0 15 16"><path d="M0 2h15v10H0z" fill="#444" /><circle cx="10" cy="11" r="4" fill="#444" stroke="#f3f3f3" /><circle cx="10" cy="11" r="1.300" fill="#f3f3f3" /></svg>
              <span>表示設定</span>
            </Inline>
            <ViewBtn $active>
              <svg width="14" height="13" viewBox="0 0 14 13" fill="none" stroke="#666"><rect x=".5" y=".5" width="13" height="12" /><path d="M5 .5v12M9.500 .5v12M.5 4.500h13M.5 8.500h13" /></svg>
            </ViewBtn>
            <ViewBtn>
              <svg width="13" height="13" viewBox="0 0 13 13" fill="none" stroke="#666"><rect x=".5" y=".5" width="12" height="12" /><rect x="3.500" y="3" width="6" height="7" /><path d="M5 5h3M5 7h3" /></svg>
            </ViewBtn>
            <ViewBtn>
              <svg width="14" height="13" viewBox="0 0 14 13" fill="none" stroke="#666"><path d="M.5 .5h13v12H.5z" /><path d="M.5 8.500h13M5 .5v8M9 .5v8" /></svg>
            </ViewBtn>
            <Inline $ml="8" $gap="5">
              <Letter $fs="13" $c="#555">−</Letter>
              <Track><TrackTick /><TrackThumb /></Track>
              <Letter $fs="13" $c="#555">+</Letter>
            </Inline>
            <Inline><Zoom>190%</Zoom></Inline>
          </StatusRight>
        </StatusBar>
      </Window>
    </Page>
  );
}

export default App;
